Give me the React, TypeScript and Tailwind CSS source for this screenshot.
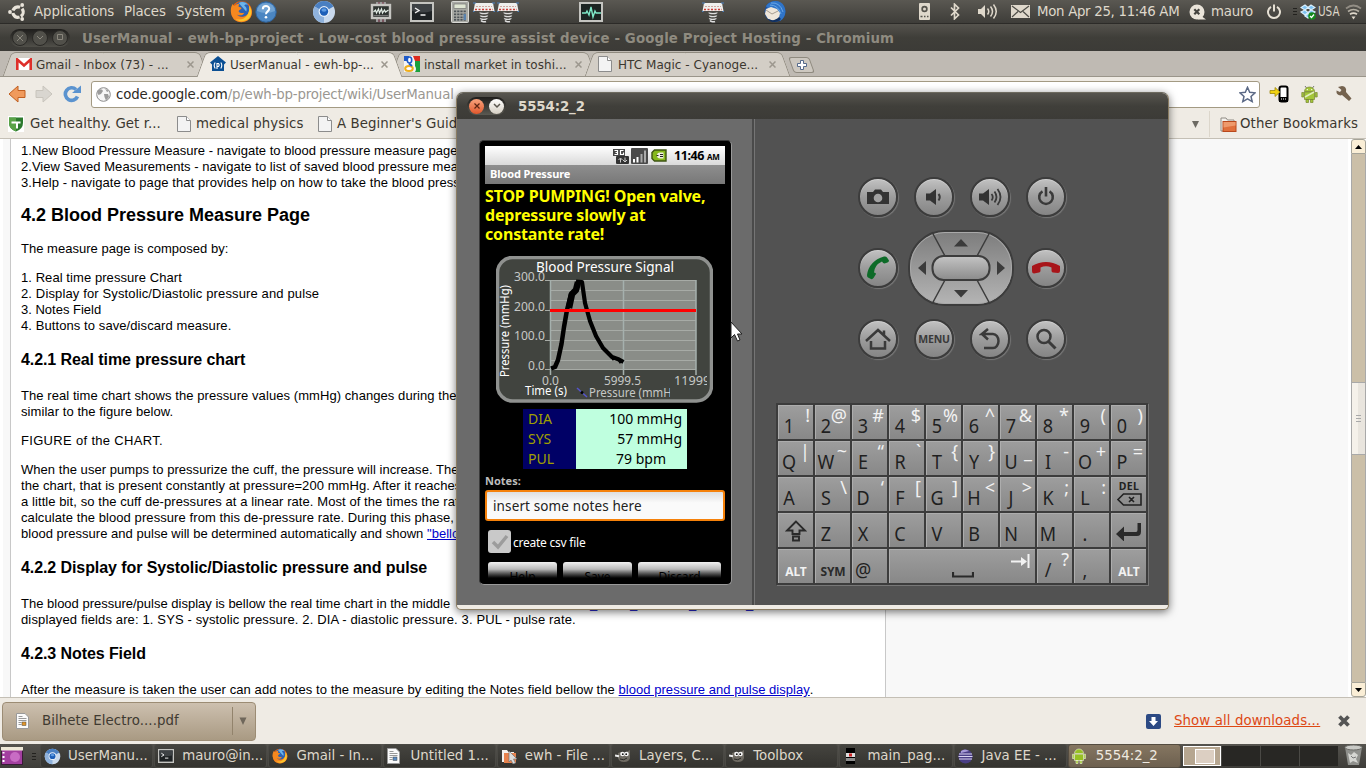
import React from 'react';

type Kids = { children?: React.ReactNode; className?: string };

/* ---------- small icons ---------- */

function Ubuntu() {
  return (
    <svg width="18" height="18" viewBox="0 0 18 18">
      <circle cx="10" cy="9" r="5.200" fill="none" stroke="#e9e4da" strokeWidth="3.200" strokeDasharray="8.600 2.290" strokeDashoffset="-1.150" transform="rotate(60 10 9)" />
      <circle cx="2" cy="9" r="1.900" fill="#e9e4da" />
      <circle cx="14.200" cy="2" r="1.900" fill="#e9e4da" />
      <circle cx="14.200" cy="16" r="1.900" fill="#e9e4da" />
    </svg>
  );
}

function Firefox({ s }: { s: number }) {
  return (
    <svg width={s} height={s} viewBox="0 0 24 24">
      <circle cx="12" cy="12" r="11" fill="#e8620c" />
      <circle cx="12.5" cy="9.5" r="8" fill="#2b62b4" />
      <path d="M9 3c3-2 8-1 10 2-3-1-4 0-4 1 2 1 3 3 2 6z" fill="#6db5ea" />
      <path d="M3 4c0 2 1 2 2 2 2-2 4-2 5-2-1 1-1 2-1 3l3 1c0 2-3 2-3 4 1 2 5 2 6 1-1 3-5 4-8 2 4 5 12 3 13-4 1-2 0-5-1-6 4 3 5 8 3 12-3 7-13 8-18 3C0 15 0 8 3 4z" fill="#f6881f" />
      <path d="M20 6c3 4 3 9 0 13-4 4-10 4-14 1 8 2 15-3 14-14z" fill="#fbc52c" />
    </svg>
  );
}

function Help() {
  return (
    <svg width="22" height="22" viewBox="0 0 22 22">
      <circle cx="11" cy="11" r="10.2" fill="#4b86c2" stroke="#2f65a0" />
      <path d="M2 10a9 8 0 0 1 18 0q-9 4-18 0z" fill="#71a3d3" />
      <path d="M7.8 8.2c0-4.2 6.4-4 6.4-.4 0 2.6-3.2 2.600-3.200 5.400" fill="none" stroke="#fff" strokeWidth="2" />
      <circle cx="11" cy="16.300" r="1.300" fill="#fff" />
    </svg>
  );
}

function Chromium({ s }: { s: number }) {
  return (
    <svg width={s} height={s} viewBox="0 0 24 24">
      <circle cx="12" cy="12" r="11" fill="#c9d9ec" />
      <path d="M12 12L2.500 6.500A11 11 0 0 1 21.500 6.500z" fill="#4a7fc1" />
      <path d="M12 12L2.500 6.500A11 11 0 0 0 12 23z" fill="#8fb2dc" />
      <circle cx="12" cy="11.500" r="5.400" fill="#e8f0fa" />
      <circle cx="12" cy="11.500" r="4.200" fill="#1d5fb8" />
      <ellipse cx="12" cy="10" rx="2.600" ry="1.700" fill="#5f9ce2" />
    </svg>
  );
}

function Chip() {
  return (
    <svg width="24" height="24" viewBox="0 0 24 24">
      <path d="M8 2v20M12 2v20M16 2v20" stroke="#999" strokeWidth="2" />
      <path d="M10 2v3M14 2v3M10 19v3M14 19v3" stroke="#b06a80" />
      <rect x="3" y="5" width="18" height="13" fill="#2f3532" stroke="#c6c6c2" strokeWidth="2.400" />
      <path d="M4.500 12l2-2 1 3 2-4 1 4 2-4 1 4 2-3 1 2 3-2" fill="none" stroke="#e3ede6" strokeWidth="1.200" />
      <path d="M4.500 15.500h15" stroke="#777" />
    </svg>
  );
}

function Term({ w, h }: { w: number; h: number }) {
  return (
    <svg width={w} height={h} viewBox="0 0 24 20" preserveAspectRatio="none">
      <rect x="1" y="1" width="22" height="18" fill="#1e2224" stroke="#c4c4c0" strokeWidth="2" />
      <path d="M2 2h20v7q-10 3-20 0z" fill="#3d4144" />
      <path d="M5 6l4 2.500-4 2.500M10.500 13h5" fill="none" stroke="#f2f2f2" strokeWidth="1.400" />
    </svg>
  );
}

function Calc() {
  return (
    <svg width="18" height="22" viewBox="0 0 18 22">
      <rect x=".5" y=".5" width="17" height="21" rx="1" fill="#a9aaa5" stroke="#d8d8d4" />
      <rect x="3" y="3" width="12" height="4.500" fill="#dfe5d3" stroke="#666" strokeWidth=".6" />
      <g fill="#4e5459">
        {[9.500, 12.500, 15.500, 18].map((y) => [3, 6.200, 9.400, 12.600].map((x) => <rect key={`${x}-${y}`} x={x} y={y} width="2.200" height="1.700" />))}
      </g>
      <path d="M12.600 13h2.400v6h-2.400z" fill="#5a82ad" />
    </svg>
  );
}

function Spring() {
  return (
    <svg width="22" height="22" viewBox="0 0 22 22">
      <path d="M2 2h18l1.500 8H.5z" fill="#efefec" />
      <path d="M0 2h3M19 2h3M0 10.500h1.500M20.500 10.500H22" stroke="#4a80c0" />
      <path d="M3 5.500h16" stroke="#cfa8a0" strokeDasharray="2 1" />
      <path d="M2 8.500h18" stroke="#cc3b35" strokeDasharray="2 1.500" strokeWidth="1.500" />
      <path d="M7 11.500c0 1.500 8 1.500 8 0M7.500 14.500c0 1.500 7 1.500 7 0M7.500 17.200c0 1.500 6.500 1.500 6.500 0M8 19.500c1 1.500 4 1.500 5 1" fill="none" stroke="#dedede" strokeWidth="1.400" />
    </svg>
  );
}

function Monitor() {
  return (
    <svg width="24" height="20" viewBox="0 0 24 20">
      <rect x="1" y="1" width="22" height="18" fill="#1c2422" stroke="#c4c4c0" strokeWidth="2" />
      <path d="M3 11h4l1-2 2 4 2-8 2 10 2-6 1 2h5" fill="none" stroke="#7fe8c8" strokeWidth="1.400" />
    </svg>
  );
}

function Thunderbird() {
  return (
    <svg width="23" height="23" viewBox="0 0 23 23">
      <circle cx="12" cy="11.500" r="10.500" fill="#1d4f9c" />
      <path d="M3 6C8-1 18 0 21 6c3 6 1 12-4 15 0-6-2-10-6-12-3-1-7 0-8-3z" fill="#2f74c8" />
      <path d="M8 3q9-1 12 9M7 5q8 0 11 9" stroke="#7ab4ee" fill="none" strokeWidth=".8" />
      <path d="M3 9l5-2 6 2 3 4-1 5-5 3-6-2-3-5z" fill="#efe6da" />
      <path d="M3 10l6 4 6-3" fill="none" stroke="#a69c90" />
      <path d="M4 18c4 3 8 3 12-1l2 2c-4 4-11 4-14-1z" fill="#12305f" />
    </svg>
  );
}

const Speaker = () => (
  <svg width="11" height="17" viewBox="0 0 11 17">
    <rect width="11" height="17" rx="1" fill="#dfd8cb" />
    <circle cx="5.500" cy="6" r="3.200" fill="#55534c" />
    <circle cx="5.500" cy="6" r="1.500" fill="#dfd8cb" />
    <path d="M1.500 13.500h2M5 13.500h1.500M8 13.500h1.500" stroke="#55534c" strokeWidth="1.600" />
  </svg>
);
const Bluetooth = () => (
  <svg width="10" height="17" viewBox="0 0 10 17" fill="none" stroke="#dfd8cb" strokeWidth="1.700">
    <path d="M1 4.500l7.500 7.500-4 3.800V1.200l4 3.800L1 12.500" />
  </svg>
);
const Volume = () => (
  <svg width="21" height="17" viewBox="0 0 21 17">
    <path d="M1 6h3l4-4v13l-4-4H1z" fill="#dfd8cb" />
    <path d="M10.500 5.500q2.500 3 0 6M13.500 3.500q4 5 0 10M16.500 1.500q5.500 7 0 14" fill="none" stroke="#dfd8cb" strokeWidth="1.500" />
  </svg>
);
const Mail = () => (
  <svg width="19" height="13" viewBox="0 0 19 13">
    <rect width="19" height="13" fill="#dfd8cb" />
    <path d="M1 1l8.500 6.500L18 1M1 12l6-5.500M18 12l-6-5.500" fill="none" stroke="#4c4b45" strokeWidth="1.200" />
  </svg>
);
const ChatX = () => (
  <svg width="17" height="16" viewBox="0 0 17 16">
    <circle cx="8" cy="8" r="7.500" fill="#eae4d9" />
    <path d="M11 11l6 4.500H9z" fill="#eae4d9" />
    <path d="M5.300 5.300l5 5M10.300 5.300l-5 5" stroke="#44433e" strokeWidth="2.200" />
  </svg>
);
const Power = () => (
  <svg width="16" height="16" viewBox="0 0 16 16" fill="none" stroke="#e6e0d4" strokeWidth="2">
    <path d="M5 2.800a6 6 0 1 0 6 0M8 .5v7" />
  </svg>
);
const Dropbox = () => (
  <svg width="16" height="16" viewBox="0 0 16 16">
    <path d="M5 1l3 2.500L5 6 1 3.500zM11 1l4 2.500L11 6 8 3.500zM1 8l4-2 3 2.500-3 2.500zM15 8l-4-2-3 2.500 3 2.500zM5 12l3-2.500 3 2.500-3 2z" fill="#7cc2f2" stroke="#d8effd" strokeWidth="1.200" />
    <circle cx="12" cy="12" r="3.800" fill="#128a1d" />
    <path d="M10 12l1.500 1.500 2.500-3" stroke="#fff" fill="none" strokeWidth="1.200" />
  </svg>
);
const Wifi = () => (
  <svg width="17" height="16" viewBox="0 0 17 16" fill="none" stroke="#dfd8cb" strokeWidth="1.700">
    <path d="M1 4.500q7.500-6 15 0" opacity=".45" />
    <path d="M3 7.500q5.500-4 11 0" opacity=".7" />
    <path d="M5 10.300q3.500-2.400 7 0" />
    <path d="M6.500 12.500h4l-2 3z" fill="#dfd8cb" stroke="none" />
  </svg>
);

const GmailIcon = () => (
  <svg width="16" height="12" viewBox="0 0 16 12">
    <rect width="16" height="12" rx="1" fill="#fff" />
    <path d="M1.300 12V1.500L8 7.500l6.700-6V12" fill="none" stroke="#de2f2a" strokeWidth="2.600" />
  </svg>
);
const HostIcon = () => (
  <svg width="16" height="16" viewBox="0 0 16 16">
    <path d="M8 0l8 6.500-2 2V15H2V8.500l-2-2z" fill="#0b4f93" />
    <path d="M5.200 6.500q-2 2.700 0 6M10.800 6.500q2 2.700 0 6M7 13V7.500h1.400q1.600 1.500 0 3H7" fill="none" stroke="#fff" strokeWidth="1.100" />
  </svg>
);
const GoogleIcon = () => (
  <svg width="16" height="16" viewBox="0 0 16 16">
    <rect width="16" height="16" fill="#f5f5f5" />
    <path d="M0 0h5v5H0z" fill="#1e5ac8" />
    <path d="M9 0h7v5h-5z" fill="#dc2a1e" />
    <path d="M11 5h5v11h-5q2-3 0-6z" fill="#1ba03c" />
    <ellipse cx="5.500" cy="4" rx="2.200" ry="3" fill="#fff" stroke="#1e5ac8" strokeWidth="1.600" />
    <ellipse cx="5" cy="12.500" rx="3.800" ry="2.500" fill="#fff" stroke="#f0ae1a" strokeWidth="2" />
    <path d="M5 7.500l3 2.500" stroke="#1e5ac8" strokeWidth="2" />
  </svg>
);
const PageIcon = () => (
  <svg width="14" height="16" viewBox="0 0 14 16">
    <path d="M.5.5h9l4 4v11H.5z" fill="#f3f3f3" stroke="#8c8c8c" />
    <path d="M9.500.5v4h4" fill="#fff" stroke="#8c8c8c" />
  </svg>
);
const Shield = () => (
  <svg width="16" height="16" viewBox="0 0 16 16">
    <rect width="16" height="16" fill="#fff" />
    <path d="M1 1.500h14V7q0 6-7 8.500Q1 13 1 7z" fill="#2c7a2e" />
    <path d="M8 1.500v14Q1 13 1 7V1.500z" fill="#5aa348" />
    <path d="M3.500 5.500h9v2h-2.500v5H8v-5H3.500z" fill="#fff" />
  </svg>
);
const DroidIcon = () => (
  <svg width="17" height="18" viewBox="0 0 17 18">
    <path d="M4 1l1.500 2M13 1l-1.500 2" stroke="#777" />
    <path d="M3.500 6.500a5 4.500 0 0 1 10 0zM3.500 7h10v7.500h-10zM.8 7.500h2V12h-2zM14.200 7.500h2V12h-2zM5 14.500h2.500v3H5zM9.500 14.500H12v3H9.500z" fill="#a4c639" stroke="#77862f" strokeWidth=".7" />
    <circle cx="6.300" cy="4.600" r=".7" fill="#fff" />
    <circle cx="10.700" cy="4.600" r=".7" fill="#fff" />
    <path d="M4 12l9-5" stroke="#e3efc0" strokeWidth="1.500" />
  </svg>
);
const TaskDroid = () => (
  <svg width="14" height="16" viewBox="0 0 14 16" fill="#97c024" stroke="#eef5d8" strokeWidth=".6">
    <path d="M2.500 5.500a4.500 4.500 0 0 1 9 0zM2.500 6.200h9v6.300h-9zM.4 6.200h1.600v4.300H.4zM12 6.200h1.600v4.300H12zM4 12.500h2v3H4zM8 12.500h2v3H8z" />
  </svg>
);
const Gimp = () => (
  <svg width="17" height="14" viewBox="0 0 17 14">
    <path d="M3 4l3-1 3 1 6-3v8q-1 4-6 4-5 0-6-4z" fill="#6f6b63" />
    <circle cx="7.500" cy="5" r="2.300" fill="#f5f5f5" />
    <circle cx="11.500" cy="5" r="2.300" fill="#f5f5f5" />
    <circle cx="7.800" cy="5.200" r=".9" fill="#111" />
    <circle cx="11.200" cy="5.200" r=".9" fill="#111" />
    <path d="M0 6.500l4 .8" stroke="#eee" strokeWidth="2" />
    <path d="M5 10q4 2 7-1" stroke="#2a2a28" fill="none" />
  </svg>
);
const DocIcon = ({ c }: { c: string }) => (
  <svg width="13" height="16" viewBox="0 0 13 16">
    <path d="M.5.5h8.500l3.500 3.500v11.500H.5z" fill="#fbfbfb" stroke="#9a9a9a" />
    <path d="M2.500 3.500h4M2.500 5.500h8M2.500 7.500h8M2.500 9.500h3M2.500 11.500h3" stroke="#999" />
    <rect x="6" y="9" width="4" height="3.500" fill={c} stroke="#444" strokeWidth=".5" />
  </svg>
);
const FolderIcon = () => (
  <svg width="17" height="15" viewBox="0 0 17 15">
    <path d="M1 14V1h5l1.500 2H14v11z" fill="#f4f2ee" stroke="#8f8b84" />
    <rect x="3" y="4.500" width="13" height="10" fill="#e0703c" stroke="#b8481c" />
    <path d="M3.500 5h12v3.500l-12 2z" fill="#ee9a6c" />
  </svg>
);

/* ---------- desktop top panel ---------- */

function Slot({ children, className }: Kids) {
  return <div className={`flex h-full shrink-0 items-center whitespace-nowrap ${className}`}>{children}</div>;
}

function TopPanel() {
  return (
    <header className="flex h-6 shrink-0 items-center border-b border-[#2c2b28] bg-gradient-to-b from-[#5a5852] to-[#3e3d39] text-[#dfd8cb]">
      <Slot className="ml-2 w-[26px]"><Ubuntu /></Slot>
      <Slot className="w-[90px] tracking-[-0.1px]">Applications</Slot>
      <Slot className="w-[52px] tracking-[-0.1px]">Places</Slot>
      <Slot className="w-[54px] tracking-[-0.1px]">System</Slot>
      <Slot className="w-[25px]"><Firefox s={23} /></Slot>
      <Slot className="w-[57px]"><Help /></Slot>
      <Slot className="w-[57px]"><Chromium s={24} /></Slot>
      <Slot className="w-[41px]"><Chip /></Slot>
      <Slot className="w-[41px]"><Term w={24} h={20} /></Slot>
      <Slot className="w-[22px]"><Calc /></Slot>
      <Slot className="w-6"><Spring /></Slot>
      <Slot className="w-[82px]"><Spring /></Slot>
      <Slot className="w-[123px]"><Monitor /></Slot>
      <Slot className="w-[61px]"><Spring /></Slot>
      <Slot className="w-[156px]"><Thunderbird /></Slot>
      <Slot className="w-[31px]"><Speaker /></Slot>
      <Slot className="w-[27px]"><Bluetooth /></Slot>
      <Slot className="w-[34px]"><Volume /></Slot>
      <Slot className="w-[26px]"><Mail /></Slot>
      <Slot className="w-[152px] tracking-[-0.3px]">Mon Apr 25, 11:46 AM</Slot>
      <Slot className="w-[22px]"><ChatX /></Slot>
      <Slot className="w-[55px] tracking-[-0.200px]">mauro</Slot>
      <Slot className="w-[27px]"><Power /></Slot>
      <Slot className="w-[7px]">
        <span className="flex flex-col gap-[2px]">
          <i className="h-px w-1 bg-[#23221f]" /><i className="h-px w-1 bg-[#23221f]" /><i className="h-px w-1 bg-[#23221f]" />
        </span>
      </Slot>
      <Slot className="w-[18px]"><Dropbox /></Slot>
      <Slot className="w-[27px]"><span className="origin-left scale-x-[0.78]">USA</span></Slot>
      <Slot className=""><Wifi /></Slot>
    </header>
  );
}

/* ---------- browser ---------- */

function TitleBar() {
  const ring = 'flex size-4 items-center justify-center rounded-full border border-[#2a2926] bg-[#51504a]';
  return (
    <div className="flex h-[27px] shrink-0 items-center bg-gradient-to-b from-[#55534d] via-[#3f3e39] to-[#3c3b37] pl-[10px]">
      <div className="flex h-[18px] w-[60px] items-center justify-between rounded-full bg-gradient-to-b from-[#1f1e1c] to-[#504f49] px-[2px]">
        <span className={ring}><svg width="6" height="6" stroke="#8a877d"><path d="M0 0l6 6M6 0L0 6" /></svg></span>
        <span className={ring}><svg width="8" height="6" stroke="#8a877d" fill="none"><path d="M1 1l3 3 3-3" /></svg></span>
        <span className={ring}><svg width="7" height="7" stroke="#8a877d" fill="none"><path d="M.5.5h5v5h-5z" /></svg></span>
      </div>
      <span className="mt-[2px] ml-[12px] font-bold tracking-[0.130px] whitespace-nowrap text-[#8f8b80]">
        UserManual - ewh-bp-project - Low-cost blood pressure assist device - Google Project Hosting - Chromium
      </span>
    </div>
  );
}

function Tab({ icon, label, active }: { icon: React.ReactNode; label: string; active?: boolean }) {
  const tone = active ? 'bg-[#efebe4]' : 'bg-[#d3cec6]';
  return (
    <div className={`relative flex w-[194px] shrink-0 items-center ${active ? 'z-10' : ''}`}>
      <span className={`absolute top-0 left-[7px] w-[60%] -skew-x-[20deg] rounded-tl-[5px] border-t border-l border-[#8f8a7f] ${active ? '-bottom-px' : 'bottom-0'} ${tone}`} />
      <span className={`absolute top-0 right-[-10px] w-1/2 skew-x-[20deg] rounded-tr-[5px] border-t border-r border-[#8f8a7f] ${active ? '-bottom-px' : 'bottom-0'} ${tone}`} />
      <span className="relative ml-4 flex w-5 items-center">{icon}</span>
      <span className="relative mt-px w-[151px] tracking-[0.040px] whitespace-nowrap text-[#3b372f]">{label}</span>
      <svg className="relative mt-px shrink-0" width="7" height="7" stroke="#9c978e" strokeWidth="1.500"><path d="M.5.5l6 6M6.500.5l-6 6" /></svg>
    </div>
  );
}

function TabStrip() {
  return (
    <div className="flex h-[26px] shrink-0 border-b border-[#9a958a] bg-[#bfbab3] pt-px text-[12px]">
      <Tab icon={<GmailIcon />} label="Gmail - Inbox (73) - ..." />
      <Tab icon={<HostIcon />} label="UserManual - ewh-bp-..." active />
      <Tab icon={<GoogleIcon />} label="install market in toshi..." />
      <Tab icon={<PageIcon />} label="HTC Magic - Cyanoge..." />
      <div className="mt-[5px] ml-[15px] flex h-4 w-[21px] skew-x-[20deg] items-center justify-center rounded-[3px] border border-[#8f8a7f] bg-[#cdc8c0]">
        <svg className="-skew-x-[20deg]" width="10" height="10" viewBox="0 0 10 10"><path d="M3.500.5h3v3h3v3h-3v3h-3v-3h-3v-3h3z" fill="#fff" stroke="#566b8c" /></svg>
      </div>
    </div>
  );
}

function Toolbar() {
  return (
    <div className="flex h-[34px] shrink-0 items-center bg-[#efebe4] pl-2">
      <svg width="18" height="18" viewBox="0 0 18 18"><path d="M1 9l9-8v4.500h7v7h-7V17z" fill="#f09a5c" stroke="#c05f20" /></svg>
      <svg className="ml-[9px]" width="18" height="18" viewBox="0 0 18 18"><path d="M17 9L8 1v4.500H1v7h7V17z" fill="#d9d6d0" stroke="#c8c4bc" /></svg>
      <svg className="ml-[10px]" width="19" height="18" viewBox="0 0 19 18">
        <path d="M14.500 11.500A6.300 6.300 0 1 1 13 4.500" fill="none" stroke="#5b93cf" strokeWidth="3.600" />
        <path d="M9 8h9V.5z" fill="#5b93cf" />
      </svg>
      <div className="ml-[9px] flex h-[27px] w-[1169px] items-center rounded-[3px] border border-[#a39a83] bg-white pl-1">
        <div className="flex w-[1143px] items-center">
          <svg width="15" height="15" viewBox="0 0 15 15"><circle cx="7.500" cy="7.500" r="6.800" fill="#f6f6f6" stroke="#8b8b8b" /><path d="M2 3q4-2 5 1L5 7 2.500 8q-2-3-.5-5zM8 7l4 0 1 3-3 3.500L8.500 10zM9 1.500l4 2.500-2 1z" fill="#9b9b9b" /></svg>
          <span className="mt-px ml-[5px] tracking-[-0.170px] whitespace-nowrap text-[#9a9791]"><span className="text-[#2d2a24]">code.google.com</span>/p/ewh-bp-project/wiki/UserManual</span>
        </div>
        <svg className="shrink-0" width="17" height="17" viewBox="0 0 17 17"><path d="M8.500 1.300l2.200 5 5.300.5-4 3.600 1.200 5.200-4.700-2.700-4.700 2.700L5 10.400 1 6.800l5.300-.5z" fill="#fff" stroke="#5c6a86" strokeWidth="1.500" /></svg>
      </div>
      <svg className="ml-[9px]" width="20" height="18" viewBox="0 0 20 18">
        <rect x="10.500" y="1.500" width="8" height="15" rx="2" fill="#fff" stroke="#000" strokeWidth="2" />
        <path d="M10 12h9v5h-9z" /><path d="M12 14h1M14 14h1M16 14h1" stroke="#fff" />
        <path d="M1 5.500h5V2.500L11 7l-5 4.500v-3H1z" fill="#f2d312" stroke="#9c870a" strokeWidth=".8" />
      </svg>
      <span className="ml-3"><DroidIcon /></span>
      <svg className="ml-[18px]" width="17" height="16" viewBox="0 0 17 16"><path d="M2 1l3.500 3-1.500 2L.5 4.500q-.5 4.500 4 5l1.500-.5 7 6 2.500-2.500L10 6q1-5.500-4-6z" fill="#75634f" /></svg>
    </div>
  );
}

function Bookmarks() {
  return (
    <div className="flex h-7 shrink-0 items-center border-b border-[#c4bfb5] bg-[#efebe4] pb-px pl-2 tracking-[0.060px] text-[#3b372f]">
      <Slot className="w-[22px] pb-px"><Shield /></Slot>
      <Slot className="w-[147px]">Get healthy. Get r...</Slot>
      <Slot className="w-[19px] pb-px"><PageIcon /></Slot>
      <Slot className="w-[122px]">medical physics</Slot>
      <Slot className="w-[19px] pb-px"><PageIcon /></Slot>
      <Slot className="w-[855px]">A Beginner's Guide to</Slot>
      <Slot className="w-[17px]"><svg width="7" height="7"><path d="M0 0h7L3.500 7z" fill="#6d6a63" /></svg></Slot>
      <Slot className="w-[11px] border-l border-[#dcd6cb]"> </Slot>
      <Slot className="w-5"><FolderIcon /></Slot>
      <Slot className="tracking-[0.100px]">Other Bookmarks</Slot>
    </div>
  );
}

function Scrollbar() {
  return (
    <div className="ml-auto flex w-[18px] flex-col bg-white pl-[3px]">
      <div className="flex h-[15px] items-center justify-center rounded-t-[3px] border border-[#a6a499] bg-[#faeed6]"><svg width="7" height="4"><path d="M0 4h7L3.500 0z" /></svg></div>
      <div className="h-[228px] border-x border-[#a9a9a9] bg-[#cbbfa8]" />
      <div className="flex h-[73px] flex-col items-center justify-center gap-[2px] border border-[#a9a9a9] bg-gradient-to-r from-[#f5f1ea] from-50% to-[#e9e5de] to-50%">
        <i className="h-px w-[5px] bg-[#a9a9a9]" /><i className="h-px w-[5px] bg-[#a9a9a9]" /><i className="h-px w-[5px] bg-[#a9a9a9]" />
      </div>
      <div className="flex-1 border-x border-[#a9a9a9] bg-[#cbbfa8]" />
      <div className="flex h-[15px] items-center justify-center rounded-b-[3px] border border-[#a6a499] bg-[#faeed6]"><svg width="7" height="4"><path d="M0 0h7L3.500 4z" /></svg></div>
    </div>
  );
}

function WikiPage() {
  const h3 = 'mt-[15px] h-[22px] text-[16px] leading-[22px] font-bold tracking-[-0.085px]';
  return (
    <main className="flex min-h-0 flex-1 overflow-hidden bg-[#f8f8f8]">
      <div className="w-[3px] bg-white" />
      <article className="ml-[7px] w-[876px] border-x border-[#c8c8c8] bg-white px-[10px] pt-1 font-['Liberation_Sans',Arial,sans-serif] text-[13px] leading-4 whitespace-nowrap text-black">
        <p className="tracking-[0.020px]">1.New Blood Pressure Measure - navigate to blood pressure measure page.</p>
        <p className="tracking-[0.030px]">2.View Saved Measurements - navigate to list of saved blood pressure measurements.</p>
        <p className="tracking-[0.090px]">3.Help - navigate to page that provides help on how to take the blood pressure.</p>
        <h2 className="mt-[13px] h-[22px] text-[18px] leading-[22px] font-bold">4.2 Blood Pressure Measure Page</h2>
        <p className="mt-[15px] tracking-[0.020px]">The measure page is composed by:</p>
        <div className="mt-[13px]">
          <p className="tracking-[0.070px]">1. Real time pressure Chart</p>
          <p className="tracking-[0.135px]">2. Display for Systolic/Diastolic pressure and pulse</p>
          <p>3. Notes Field</p>
          <p className="tracking-[0.085px]">4. Buttons to save/discard measure.</p>
        </div>
        <h3 className={h3}>4.2.1 Real time pressure chart</h3>
        <p className="mt-[17px] tracking-[0.070px]">The real time chart shows the pressure values (mmHg) changes during the test,<br />similar to the figure below.</p>
        <p className="mt-[13px] tracking-[0.320px]">FIGURE of the CHART.</p>
        <div className="mt-[13px]">
          <p className="tracking-[0.040px]">When the user pumps to pressurize the cuff, the pressure will increase. The red</p>
          <p className="tracking-[0.065px]">the chart, that is present constantly at pressure=200 mmHg. After it reaches</p>
          <p className="tracking-[0.080px]">a little bit, so the cuff de-pressures at a linear rate. Most of the times the rate</p>
          <p className="tracking-[0.080px]">calculate the blood pressure from this de-pressure rate. During this phase, the</p>
          <p className="tracking-[0.030px]">blood pressure and pulse will be determined automatically and shown <a className="text-[#0000cc] underline">"bellow"</a></p>
        </div>
        <h3 className={h3}>4.2.2 Display for Systolic/Diastolic pressure and pulse</h3>
        <div className="mt-[17px] flex h-4">
          <span className="w-[569px]">The blood pressure/pulse display is bellow the real time chart in the middle</span>
          <span className="w-10 text-[#0000cc]">_</span>
          <span className="w-[59px] text-[#0000cc]">_</span>
          <span className="w-[57px] text-[#0000cc]">_</span>
          <span className="w-[23px] text-[#0000cc]">_</span>
        </div>
        <p className="tracking-[0.135px]">displayed fields are: 1. SYS - systolic pressure. 2. DIA - diastolic pressure. 3. PUL - pulse rate.</p>
        <h3 className={h3}>4.2.3 Notes Field</h3>
        <p className="mt-[17px] tracking-[0.077px]">After the measure is taken the user can add notes to the measure by editing the Notes field bellow the <a className="tracking-[0.035px] text-[#0000cc] underline">blood pressure and pulse display</a>.</p>
      </article>
      <Scrollbar />
    </main>
  );
}

function DownloadBar() {
  return (
    <div className="flex h-[47px] shrink-0 items-center border-t border-[#c4bfb5] bg-[#efebe4] pl-[2px]">
      <div className="flex h-[39px] w-[254px] items-center rounded-[4px] border border-[#9c8c74] bg-gradient-to-b from-[#cdc0af] to-[#a99a83] pl-[13px] text-[#3f3a31]">
        <DocIcon c="#e0962c" />
        <span className="ml-[13px] w-[190px] tracking-[0.060px] whitespace-nowrap">Bilhete Electro....pdf</span>
        <span className="h-7 w-[7px] border-l border-[#92836c]" />
        <svg width="8" height="8"><path d="M.5.5h7L4 8z" fill="#6f675b" /></svg>
      </div>
      <svg className="ml-[890px]" width="15" height="15" viewBox="0 0 15 15"><rect width="15" height="15" rx="2" fill="#2c4a84" /><path d="M5.500 3h4v4H12l-4.500 5L3 7h2.500z" fill="#fff" /></svg>
      <a className="ml-[13px] w-[163px] tracking-[0.100px] whitespace-nowrap text-[#dd4814] underline">Show all downloads...</a>
      <svg width="14" height="14" viewBox="0 0 14 14"><path d="M2.500 2.500l9 9M11.500 2.500l-9 9" stroke="#555" strokeWidth="3.800" /></svg>
    </div>
  );
}

/* ---------- bottom task list ---------- */

const tasks: { icon: React.ReactNode; label: string; active?: boolean }[] = [
  { icon: <Chromium s={17} />, label: 'UserManu...' },
  { icon: <Term w={16} h={14} />, label: 'mauro@in...' },
  { icon: <Firefox s={16} />, label: 'Gmail - In...' },
  { icon: <DocIcon c="#5a8ac0" />, label: 'Untitled 1...' },
  { icon: <svg width="17" height="16" viewBox="0 0 17 16"><path d="M1 14V2h5l1.500 2H13v10z" fill="#f4f2ee" /><path d="M3 5h12v10H3z" fill="#e8834e" /><path d="M8 3l8 8h-3.500l2 4-2.500 1-2-4-2 2z" fill="#dcdcdc" stroke="#777" strokeWidth=".7" /></svg>, label: 'ewh - File ...' },
  { icon: <Gimp />, label: 'Layers, C...' },
  { icon: <Gimp />, label: 'Toolbox' },
  { icon: <svg width="16" height="16" viewBox="0 0 16 16"><path d="M3 0h9v16H3z" fill="#000" /><path d="M3 5h9v4H3z" fill="#ddd" /><path d="M6 5.500h3v3H6z" fill="#c22" /><path d="M3 10h9v3H3z" fill="#8d8d8d" /></svg>, label: 'main_pag...' },
  { icon: <svg width="15" height="15" viewBox="0 0 15 15"><circle cx="7.500" cy="7.500" r="7" fill="#4a3f86" /><path d="M1 5h13M.5 7.500h14M1 10h13" stroke="#d9d4f0" strokeWidth="1.100" /><path d="M3 2q4-3 8 0l-8 2z" fill="#a79bd8" /></svg>, label: 'Java EE - ...' },
  { icon: <TaskDroid />, label: '5554:2_2', active: true },
];

function TaskBar() {
  return (
    <footer className="flex h-6 shrink-0 bg-gradient-to-b from-[#55534e] to-[#3e3d39] text-[#dfd8cb]">
      <div className="flex w-10 items-center">
        <svg className="ml-px" width="22" height="18" viewBox="0 0 22 18"><rect x=".5" y=".5" width="21" height="17" fill="#a33fa0" stroke="#3a1a38" /><path d="M0 0h22v3.500H0z" fill="#efe9d8" /><circle cx="14" cy="10" r="5" fill="#c86cc4" /><path d="M2.500 5v1.500M2.500 9v2M2.500 13v2" stroke="#fff" strokeWidth="2" /></svg>
        <span className="ml-[9px] flex flex-col gap-[2px]"><i className="h-px w-1 bg-[#23221f]" /><i className="h-px w-1 bg-[#23221f]" /><i className="h-px w-1 bg-[#23221f]" /></span>
      </div>
      <div className="grid w-[1142px] grid-cols-10">
        {tasks.map((t) => (
          <div
            key={t.label}
            className={`mr-px flex items-center rounded-[3px] border whitespace-nowrap ${t.active ? 'border-[#544c40] bg-gradient-to-b from-[#857661] to-[#6d604f] text-[#efeae0]' : 'border-[#4a4944] bg-gradient-to-b from-[#45443f] to-[#34332f]'}`}
          >
            <span className="ml-[3px] flex w-6 shrink-0 items-center">{t.icon}</span>
            {t.label}
          </div>
        ))}
      </div>
      <div className="my-[2px] ml-px flex w-[155px] gap-px bg-[#4a4945]">
        <div className="flex w-[38px] items-center justify-end border border-white bg-[#b6a690] pr-[5px]">
          <span className="-mr-[18px] h-3 w-3 rounded-full bg-[#5a8fd0]" />
          <span className="z-10 h-[15px] w-5 border border-white bg-[#dccfc2]" />
        </div>
        <div className="flex-1 bg-[#282724]" /><div className="flex-1 bg-[#282724]" /><div className="flex-1 bg-[#282724]" />
      </div>
      <svg className="ml-[5px]" width="20" height="23" viewBox="0 0 20 23"><path d="M2 3h17l-3 18H5z" fill="#8f908c" /><ellipse cx="10.500" cy="3.500" rx="8.500" ry="2.500" fill="#c9cac6" stroke="#6c6c68" /><path d="M5 9l3 2 3-3 4 3-2 4 2 4-5-2-3 2-1-5z" fill="#d5d6d2" /><path d="M8 12l2 2 3-1" stroke="#777" fill="none" /></svg>
    </footer>
  );
}

/* ---------- emulator ---------- */

function Chart() {
  const sans = "'Noto Sans', sans-serif";
  return (
    <svg className="block" width="217" height="147" viewBox="0 0 217 147" fontFamily={sans}>
      <rect x="1.500" y="1.500" width="214" height="143.500" rx="15" fill="#41443f" stroke="#8f918f" strokeWidth="3.500" />
      <rect x="54" y="24" width="146" height="90" fill="#8a8d88" />
      <path d="M54 24.500h146M54 34.500h146M54 44.500h146M54 64.500h146M54 74.500h146M54 84.500h146M54 94.500h146M54 104.500h146M49 113.500h151M49 54.500h5M49 84.500h5M49 24.500h5" stroke="#a7aba6" />
      <path d="M54.500 24v95M127.500 24v95M200 24v95" stroke="#a5b0ad" strokeWidth="1.500" />
      <g fill="none" stroke="#000" strokeLinejoin="round">
        <path d="M55 112.500L59 111L62 104L65.500 88L68 71L71 54L75 38" strokeWidth="4.500" />
        <path d="M73 52L76 38L80 34L82 26" strokeWidth="6.500" />
        <path d="M80 25.500L86 26L89 47L94 65L100 80L107 92L116 101L123 103.500L127.500 106" strokeWidth="4.200" />
        <path d="M116 101l2 3M123 104l2 3" strokeWidth="3" />
      </g>
      <path d="M54 54.500h146" stroke="#ff0000" strokeWidth="2.800" />
      <g fontSize="13" fill="#c6c8c6">
        <text x="49" y="25" textAnchor="end" textLength="31" lengthAdjust="spacingAndGlyphs">300.0</text>
        <text x="49" y="55" textAnchor="end" textLength="31" lengthAdjust="spacingAndGlyphs">200.0</text>
        <text x="49" y="84" textAnchor="end" textLength="31" lengthAdjust="spacingAndGlyphs">100.0</text>
        <text x="49" y="114" textAnchor="end" textLength="17" lengthAdjust="spacingAndGlyphs">0.0</text>
        <text x="46" y="129" textLength="17" lengthAdjust="spacingAndGlyphs">0.0</text>
        <text x="108" y="129" textLength="37" lengthAdjust="spacingAndGlyphs">5999.5</text>
      </g>
      <svg x="0" y="0" width="211" height="147"><text x="178" y="129" fontSize="13" fill="#c6c8c6" textLength="47" lengthAdjust="spacingAndGlyphs">11999.0</text></svg>
      <text x="40" y="15.500" fontSize="13.500" fill="#fff" textLength="138" lengthAdjust="spacingAndGlyphs">Blood Pressure Signal</text>
      <text transform="translate(13 121) rotate(-90)" fontSize="12" fill="#fff" textLength="92" lengthAdjust="spacingAndGlyphs">Pressure (mmHg)</text>
      <text x="29" y="139" fontSize="12" fill="#fff" textLength="42" lengthAdjust="spacingAndGlyphs">Time (s)</text>
      <path d="M81 132l10 9" stroke="#5555cc" strokeWidth="1.500" /><circle cx="86" cy="136.500" r="1.500" fill="#000" />
      <svg x="0" y="0" width="174" height="147"><text x="93" y="141" fontSize="12" fill="#c6c8c6" textLength="93" lengthAdjust="spacingAndGlyphs">Pressure (mmHg)</text></svg>
    </svg>
  );
}

function Reading({ name, value, pad }: { name: string; value: string; pad: string }) {
  return (
    <div className="flex h-5 leading-5">
      <span className="w-[53px] bg-[#000066] pl-[5px] text-[#a0a000]">{name}</span>
      <span className={`flex-1 bg-[#bfffdf] text-right text-black ${pad}`}>{value}</span>
    </div>
  );
}

function Phone() {
  const btn = 'flex h-[29px] justify-center rounded-t-[3px] bg-gradient-to-b from-[#f2f2f2] via-[#b8b8b8] via-25% to-[#000] to-60% pt-[7px] text-[12px] leading-[16px] text-black';
  return (
    <div className="h-[445px] w-[253px] rounded-[5px] border border-t-[#3a3a3a] border-r-[#999] border-b-[#999] border-l-[#3a3a3a] bg-black px-[5px] pt-[5px] font-['Noto_Sans',sans-serif] whitespace-nowrap">
      <div className="flex h-[433px] w-[240px] flex-col overflow-hidden">
        <div className="flex h-[19px] shrink-0 items-center justify-end bg-gradient-to-b from-white to-[#d9d9d9] pr-[5px] text-black">
          <svg width="16" height="16" viewBox="0 0 16 16"><path d="M0 1h12v7H0z" fill="#444" /><path d="M1.500 2.500h3v4h-3M2.500 4.500h2M10.500 2.500h-3v4h3v-2" fill="none" stroke="#fff" strokeWidth="1.200" /><rect x="3" y="8" width="13" height="8" rx="1" fill="#333" /><path d="M7.500 14.500v-4M5.500 12l2-2 2 2M12 9.500v4M10 12l2 2 2-2" stroke="#ccc" fill="none" /></svg>
          <svg className="ml-[2px]" width="17" height="16" viewBox="0 0 17 16"><rect width="17" height="16" rx="1" fill="#4a4a4a" /><path d="M2 11h2v3.500H2zM5.500 9h2v5.500h-2z" fill="#fff" /><path d="M9.500 6h2v8.500h-2zM13 2.500h2v12h-2z" fill="#aaa" /></svg>
          <svg className="ml-[3px]" width="16" height="13" viewBox="0 0 16 13"><path d="M3.500 1h11.500v11H3.500L1 9.500v-6z" fill="#86b81b" stroke="#3d5312" strokeWidth="1.400" /><path d="M9 3.500a3 3 0 0 0 0 6h3.500v-6z" fill="#f0f0e0" /><path d="M5.500 6.500h2M9 5.500h3M9 7.500h3" stroke="#222" strokeWidth="1.200" /></svg>
          <span className="ml-[7px] w-[33px] text-[12.500px] font-bold tracking-[-0.4px]">11:46</span>
          <span className="mt-[3px] w-[13px] text-[8px] font-bold tracking-[-0.4px]">AM</span>
        </div>
        <div className="h-[19px] shrink-0 bg-gradient-to-b from-[#8e8e8e] to-[#787878] pl-[5px] text-[11px] leading-[18px] font-bold tracking-[-0.1px] text-white">Blood Pressure</div>
        <p className="mt-[3px] h-[57px] shrink-0 text-[16px] leading-[19px] font-bold tracking-[-0.170px] text-[#ffff00]">
          STOP PUMPING! Open valve,<br />depressure slowly at<br />constante rate!
        </p>
        <div className="mt-[12px] ml-[11px] h-[147px] w-[217px] shrink-0"><Chart /></div>
        <div className="mt-[6px] ml-[38px] w-[164px] shrink-0 text-[14px]">
          <Reading name="DIA" value="100 mmHg" pad="pr-[5px]" />
          <Reading name="SYS" value="57 mmHg" pad="pr-[5px]" />
          <Reading name="PUL" value="79 bpm" pad="pr-[21px]" />
        </div>
        <span className="mt-[3px] h-[18px] shrink-0 text-[11px] leading-[17px] font-bold text-[#bdbdbd]">Notes:</span>
        <div className="h-[31px] shrink-0 rounded-[3px] border-2 border-[#f5810a] bg-gradient-to-b from-[#dedede] to-[#fafafa] to-40% pl-[6px] text-[13.500px] leading-[28px] tracking-[0.120px] text-[#222]">insert some notes here</div>
        <div className="mt-[9px] flex h-[23px] shrink-0 items-center pl-[3px]">
          <svg width="23" height="23" viewBox="0 0 23 23"><rect width="23" height="23" rx="3" fill="#c9c9c9" /><path d="M5 12l5 5 9-11" fill="none" stroke="#9c9c9c" strokeWidth="3.500" /></svg>
          <span className="mt-[2px] ml-[2px] text-[12px] tracking-[-0.240px] text-white">create csv file</span>
        </div>
        <div className="mt-[9px] flex shrink-0 gap-[6px] pl-[3px]">
          <div className={`w-[69px] ${btn}`}>Help</div>
          <div className={`w-[69px] ${btn}`}>Save</div>
          <div className={`w-[83px] ${btn}`}>Discard</div>
        </div>
      </div>
    </div>
  );
}

function Round({ children }: Kids) {
  return (
    <div className="flex size-10 items-center justify-center rounded-full border-2 border-[#3c3c3c] bg-gradient-to-b from-[#c2c2c2] via-[#9c9c9c] to-[#858585] shadow-[inset_0_1px_0_#d0d0d0,1px_1px_1px_#777]">
      {children}
    </div>
  );
}

function DPad() {
  return (
    <svg className="-mr-[4px] -ml-[6px] shrink-0" width="106" height="76" viewBox="0 0 106 76">
      <defs>
        <linearGradient id="pad" x1="0" y1="0" x2="0" y2="1"><stop offset="0" stopColor="#7c7c7c" /><stop offset="1" stopColor="#b5b5b5" /></linearGradient>
        <linearGradient id="knob" x1="0" y1="0" x2="0" y2="1"><stop offset="0" stopColor="#c4c4c4" /><stop offset="1" stopColor="#8b8b8b" /></linearGradient>
      </defs>
      <rect x="1" y="1" width="104" height="74" rx="36" fill="url(#pad)" stroke="#3c3c3c" strokeWidth="2" />
      <rect x="2.500" y="2.500" width="101" height="71" rx="34.500" fill="none" stroke="#a9a9a9" />
      <path d="M24 2l13 24M82 2L69 26M24 74l13-24M82 74L69 50" stroke="#3c3c3c" strokeWidth="1.500" />
      <rect x="24.500" y="26" width="57" height="24" rx="11" fill="url(#knob)" stroke="#3c3c3c" strokeWidth="2" />
      <path d="M46 16.500l7-7.500 7 7.500zM46 60l7 7.500 7-7.500zM18 31v14l-8-7zM89 31v14l8-7z" fill="#3b3b3b" />
    </svg>
  );
}

function ControlPad() {
  const st = { fill: 'none', stroke: '#3a3a3a' };
  return (
    <div className="flex w-[208px] flex-col gap-[31px]">
      <div className="flex justify-between">
        <Round><svg width="22" height="16" viewBox="0 0 22 16"><path d="M0 3h6l2-2.500h6L16 3h6v12H0z" fill="#333" /><circle cx="11" cy="9" r="4.300" fill="#a2a2a2" /></svg></Round>
        <Round><svg width="18" height="18" viewBox="0 0 18 18"><path d="M1 5.500h4L11 1v16l-6-4.500H1z" fill="#333" /><path d="M13.500 6q2.500 3 0 6.500" {...st} strokeWidth="2" /></svg></Round>
        <Round><svg width="24" height="18" viewBox="0 0 24 18"><path d="M1 5.500h4L11 1v16l-6-4.500H1z" fill="#333" /><path d="M13.500 6q2.500 3 0 6.500M16.500 3.500q4 5.500 0 11M19.500 1q6 8 0 16" {...st} strokeWidth="1.800" /></svg></Round>
        <Round><svg className="-mt-[3px]" width="18" height="20" viewBox="0 0 18 20"><path d="M5.500 5.300a6.800 6.800 0 1 0 7 0M9 1v9.500" {...st} strokeWidth="2.600" /></svg></Round>
      </div>
      <div className="flex h-10 items-center justify-between">
        <Round><svg width="24" height="24" viewBox="0 0 24 24"><path d="M1 19Q3 5 18 .5q2-.5 3 1l2 3q0 1.500-1.500 2l-3 1q-1.500 0-2.500-2Q8.500 9 8 16.500q2 0 2 1.500l-2.500 4q-1 1.500-2.500 1l-3-1.500Q1 21 1 19z" fill="#0d6b28" /></svg></Round>
        <DPad />
        <Round><svg width="28" height="14" viewBox="0 0 28 14"><path d="M0 10V5Q14-3 28 5v5q0 2-2 2l-5-.5q-1.500 0-1.500-2V6.500Q14 4 8.500 6.500v3q0 2-1.500 2L2 12.500Q0 12.500 0 10z" fill="#a8151a" /></svg></Round>
      </div>
      <div className="flex justify-between">
        <Round><svg width="26" height="24" viewBox="0 0 26 24"><path d="M1 14L13 3l12 11M19 8V3.500M6 14v7.500h14V14" {...st} strokeWidth="2.500" /></svg></Round>
        <Round><span className="font-['Noto_Sans',sans-serif] text-[10.500px] font-bold tracking-[-0.150px] text-[#3a3a3a]">MENU</span></Round>
        <Round><svg width="22" height="22" viewBox="0 0 22 22"><path d="M9 1L3 6h11a5.500 7 0 0 1 0 14H5M3 6l6 5.500" {...st} strokeWidth="2.500" /></svg></Round>
        <Round><svg width="22" height="22" viewBox="0 0 22 22"><circle cx="9" cy="8.500" r="6.500" {...st} strokeWidth="2.500" /><path d="M13.500 13.500l7 7" {...st} strokeWidth="3" /></svg></Round>
      </div>
    </div>
  );
}

const rows: [string, string][][] = [
  [['1', '!'], ['2', '@'], ['3', '#'], ['4', '$'], ['5', '%'], ['6', '^'], ['7', '&'], ['8', '*'], ['9', '('], ['0', ')']],
  [['Q', '|'], ['W', '~'], ['E', '“'], ['R', '`'], ['T', '{'], ['Y', '}'], ['U', '_'], ['I', '-'], ['O', '+'], ['P', '=']],
  [['A', ''], ['S', '\\'], ['D', '‘'], ['F', '['], ['G', ']'], ['H', '<'], ['J', '>'], ['K', ';'], ['L', ':'], ['DEL', '']],
  [['SHIFT', ''], ['Z', ''], ['X', ''], ['C', ''], ['V', ''], ['B', ''], ['N', ''], ['M', ''], ['.', ''], ['ENTER', '']],
  [['ALT', ''], ['SYM', ''], ['@', ''], ['SPACE', ''], ['/', '?'], [',', ''], ['ALT', '']],
];

function KeyFace({ main, alt }: { main: string; alt: string }) {
  switch (main) {
    case 'DEL':
      return (
        <span className="flex w-full flex-col items-center pt-[3px]">
          <b className="text-[10.500px] leading-[10px] tracking-[0.300px] text-[#222]">DEL</b>
          <svg className="mt-[2px]" width="25" height="13" viewBox="0 0 25 13"><path d="M1 6.500L6.500 1H24v11H6.500zM12 4l5 5M17 4l-5 5" fill="none" stroke="#222" strokeWidth="1.600" /></svg>
        </span>
      );
    case 'SHIFT':
      return <svg className="mt-[6px] ml-[6px]" width="22" height="22" viewBox="0 0 22 22" fill="none" stroke="#2a2a2a" strokeWidth="1.900"><path d="M11 1.500L2 10.500h5.500v3.500h7v-3.500H20zM8 16.500h6v4H8z" /></svg>;
    case 'ENTER':
      return <svg className="mt-[9px] ml-[4px]" width="26" height="18" viewBox="0 0 26 18"><path d="M0 11l8-7.500V9h12q1.500 0 1.500-2V0H25v8.500q0 4.500-4 4.500H8v5.500z" fill="#2a2a2a" /></svg>;
    case 'SPACE':
      return (
        <span className="relative flex w-full items-end justify-center pb-[5px]">
          <svg width="22" height="6"><path d="M1 0v4.500h20V0" fill="none" stroke="#2a2a2a" strokeWidth="2.200" /></svg>
          <svg className="absolute top-[4px] right-[5px]" width="19" height="14" viewBox="0 0 19 14"><path d="M0 7.500h12M17.500 0v14" stroke="#f2f2f2" strokeWidth="2" /><path d="M10 3l6 4.500-6 4.500z" fill="#f2f2f2" /></svg>
        </span>
      );
    case 'ALT':
      return <b className="mt-[13px] w-full text-center text-[12px] leading-[17px] tracking-[-0.100px] text-[#f2f2f2]">ALT</b>;
    case 'SYM':
      return <b className="mt-[13px] w-full text-center text-[12px] leading-[17px] tracking-[-0.200px] text-[#2a2a2a]">SYM</b>;
    default:
      return (
        <>
          <span className="mt-[9px] flex w-[20px] scale-x-[0.9] justify-center text-[20px] leading-[22px] text-[#1f1f1f]">{main}</span>
          <span className="absolute -top-px right-[3px] text-[18px] leading-[21px] text-[#f2f2f2]">{alt}</span>
        </>
      );
  }
}

function Keyboard() {
  return (
    <div className="grid w-[372px] grid-cols-[repeat(10,35px)] gap-[2px] border-2 border-[#3c3c3c] bg-[#3c3c3c] font-['Noto_Sans',sans-serif] shadow-[1px_1px_0_#777]">
      {rows.flatMap((r, i) =>
        r.map(([m, a], j) => (
          <div
            key={`${i}-${j}`}
            className={`relative flex h-[34px] border-t border-l border-[#adadad] bg-gradient-to-b from-[#9d9d9d] to-[#888] ${m === 'SPACE' ? 'col-span-4' : ''}`}
          >
            <KeyFace main={m} alt={a} />
          </div>
        )),
      )}
    </div>
  );
}

function Emulator() {
  return (
    <section className="absolute top-[92px] left-[456px] z-20 flex h-[518px] w-[713px] flex-col overflow-hidden rounded-t-[7px] rounded-b-[5px] border border-[#8a7c62] border-t-[#6d6a5f] bg-[#efebe4] shadow-[0_2px_8px_rgba(0,0,0,0.55)]">
      <div className="flex h-[26px] shrink-0 items-center bg-gradient-to-b from-[#57554f] via-[#403f3a] to-[#3c3b37] pl-[10px]">
        <div className="flex h-[18px] w-[39px] items-center justify-between rounded-full bg-gradient-to-b from-[#1f1e1c] to-[#5a5952] px-[2px]">
          <span className="flex size-[15px] items-center justify-center rounded-full bg-gradient-to-b from-[#f8a37c] to-[#e0562a]"><svg width="6" height="6" stroke="#5c2512" strokeWidth="1.200"><path d="M.5.5l5 5M5.500.5l-5 5" /></svg></span>
          <span className="flex size-[15px] items-center justify-center rounded-full bg-gradient-to-b from-white to-[#d5cfc3]"><svg width="8" height="6" stroke="#5a574f" fill="none" strokeWidth="1.500"><path d="M1 1l3 3 3-3" /></svg></span>
        </div>
        <span className="mt-px ml-[12px] font-bold tracking-[-0.100px] text-[#dfd8cb]">5554:2_2</span>
      </div>
      <div className="flex h-[486px] shrink-0">
        <div className="w-[297px] shrink-0 border-r-2 border-[#4a4a4a] bg-[#6b6b6b] pt-[21px] pl-[22px]"><Phone /></div>
        <div className="flex-1 border-l border-[#757575] bg-[#525252] pt-[58px] pl-[21px]">
          <div className="pl-[82px]"><ControlPad /></div>
          <div className="mt-[44px]"><Keyboard /></div>
        </div>
      </div>
    </section>
  );
}

export default function App() {
  return (
    <div className="relative flex h-[768px] w-[1366px] flex-col overflow-hidden bg-[#efebe4] font-['DejaVu_Sans',sans-serif] text-[13.333px] leading-[16px]">
      <TopPanel />
      <TitleBar />
      <TabStrip />
      <Toolbar />
      <Bookmarks />
      <WikiPage />
      <DownloadBar />
      <TaskBar />
      <Emulator />
      <svg className="absolute top-[321px] left-[730px] z-30" width="13" height="21" viewBox="0 0 13 21">
        <path d="M1 1v16l3.500-3.500L7.500 20l2.500-1-2.500-6h4.500z" fill="#fff" stroke="#222" strokeWidth="1" />
      </svg>
    </div>
  );
}
